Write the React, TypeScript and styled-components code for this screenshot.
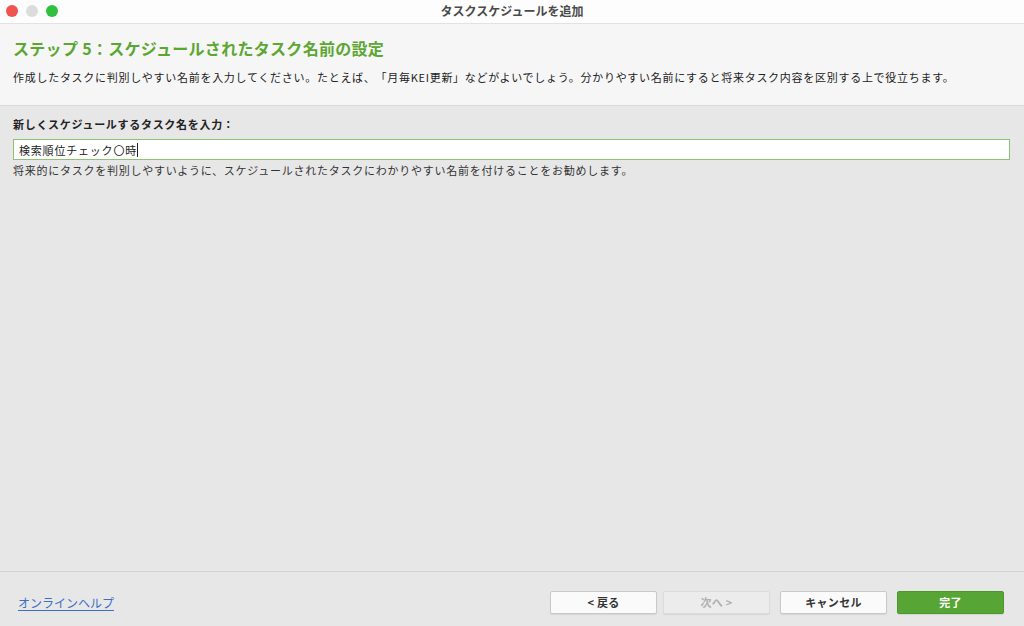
import styled, { createGlobalStyle } from 'styled-components';

const GlobalStyle = createGlobalStyle`
	html, body {
		margin: 0;
		padding: 0;
	}
	body {
		font-family: "Noto Sans CJK JP", "Noto Sans", sans-serif;
		background: #e7e7e7;
		text-spacing-trim: space-all;
	}
`;

const Window = styled.div`
	width: 1024px;
	height: 626px;
	display: flex;
	flex-direction: column;
	background: #e7e7e7;
	overflow: hidden;
`;

const TitleBar = styled.div`
	height: 24px;
	flex: none;
	display: flex;
	align-items: center;
	position: relative;
	background: #fdfdfd;
	border-bottom: 1px solid #e2e2e2;
	box-sizing: border-box;
`;

const Lights = styled.div`
	display: flex;
	gap: 8px;
	padding-left: 6px;
	margin-top: -2px;
`;

const Light = styled.span<{ $color: string }>`
	width: 12px;
	height: 12px;
	border-radius: 50%;
	background: ${(p) => p.$color};
`;

const WindowTitle = styled.div`
	position: absolute;
	left: 0;
	right: 0;
	top: 0;
	height: 22px;
	line-height: 22px;
	text-align: center;
	font-size: 12px;
	font-weight: 700;
	color: #4a4a4a;
	pointer-events: none;
`;

const Header = styled.header`
	flex: none;
	height: 82px;
	box-sizing: border-box;
	background: #f6f6f6;
	border-bottom: 1px solid #d9d9d9;
	padding: 13px 13px 0;
`;

const StepTitle = styled.h1`
	margin: 0;
	font-size: 16px;
	line-height: 22px;
	font-weight: 700;
	color: #5ca632;
	letter-spacing: 0.3px;
`;

const Description = styled.p`
	margin: 10px 0 0;
	font-size: 11px;
	line-height: 16px;
	color: #222;
	letter-spacing: 0.72px;
`;

const Body = styled.main`
	flex: 1;
	padding: 10px 13px 0 13px;
	display: flex;
	flex-direction: column;
`;

const Label = styled.div`
	font-size: 11px;
	line-height: 16px;
	font-weight: 700;
	color: #222;
	letter-spacing: 0.7px;
`;

const NameInput = styled.div`
	margin-top: 7px;
	width: 997px;
	height: 21px;
	box-sizing: border-box;
	background: #fff;
	border: 1px solid #8fc273;
	display: flex;
	align-items: center;
	padding-left: 5px;
	font-size: 11px;
	color: #222;
	letter-spacing: 0.8px;
`;

const Caret = styled.span`
	display: inline-block;
	width: 1px;
	height: 14px;
	background: #222;
`;

const Hint = styled.div`
	margin-top: 2px;
	font-size: 11px;
	line-height: 16px;
	color: #333;
	letter-spacing: 0.75px;
`;

const Footer = styled.footer`
	flex: none;
	height: 55px;
	box-sizing: border-box;
	border-top: 1px solid #d2d2d2;
	display: flex;
	align-items: center;
	padding: 0 20px 0 18px;
`;

const HelpLink = styled.a`
	font-size: 12px;
	color: #3b6fc4;
	text-decoration: underline;
	text-underline-offset: 2px;
	margin-top: 6px;
	cursor: pointer;
`;

const Buttons = styled.div`
	margin-left: auto;
	display: flex;
	align-items: center;
	margin-top: 6px;
`;

const Button = styled.button<{ $variant?: 'primary' | 'disabled'; $gap?: number }>`
	width: 107px;
	height: 23px;
	margin-left: ${(p) => p.$gap ?? 0}px;
	box-sizing: border-box;
	font-family: inherit;
	font-size: 11px;
	font-weight: 700;
	letter-spacing: 0.3px;
	border-radius: 2px;
	cursor: pointer;
	border: 1px solid
		${(p) => (p.$variant === 'primary' ? '#4b9a29' : p.$variant === 'disabled' ? '#dcdcdc' : '#c9c9c9')};
	background: ${(p) => (p.$variant === 'primary' ? '#57a535' : p.$variant === 'disabled' ? '#ececec' : '#fafafa')};
	color: ${(p) => (p.$variant === 'primary' ? '#fff' : p.$variant === 'disabled' ? '#b0b0b0' : '#333')};
	box-shadow: 0 1px 1px rgba(0, 0, 0, 0.08);
`;

export default function App() {
	return (
		<Window>
			<GlobalStyle />
			<TitleBar>
				<Lights>
					<Light $color="#f0534d" />
					<Light $color="#dcdcdc" />
					<Light $color="#2fc040" />
				</Lights>
				<WindowTitle>タスクスケジュールを追加</WindowTitle>
			</TitleBar>
			<Header>
				<StepTitle>ステップ 5：スケジュールされたタスク名前の設定</StepTitle>
				<Description>
					作成したタスクに判別しやすい名前を入力してください。たとえば、「月毎KEI更新」などがよいでしょう。分かりやすい名前にすると将来タスク内容を区別する上で役立ちます。
				</Description>
			</Header>
			<Body>
				<Label>新しくスケジュールするタスク名を入力：</Label>
				<NameInput>
					検索順位チェック〇時
					<Caret />
				</NameInput>
				<Hint>将来的にタスクを判別しやすいように、スケジュールされたタスクにわかりやすい名前を付けることをお勧めします。</Hint>
			</Body>
			<Footer>
				<HelpLink>オンラインヘルプ</HelpLink>
				<Buttons>
					<Button>&lt; 戻る</Button>
					<Button $variant="disabled" $gap={6}>
						次へ &gt;
					</Button>
					<Button $gap={10}>キャンセル</Button>
					<Button $variant="primary" $gap={10}>
						完了
					</Button>
				</Buttons>
			</Footer>
		</Window>
	);
}
